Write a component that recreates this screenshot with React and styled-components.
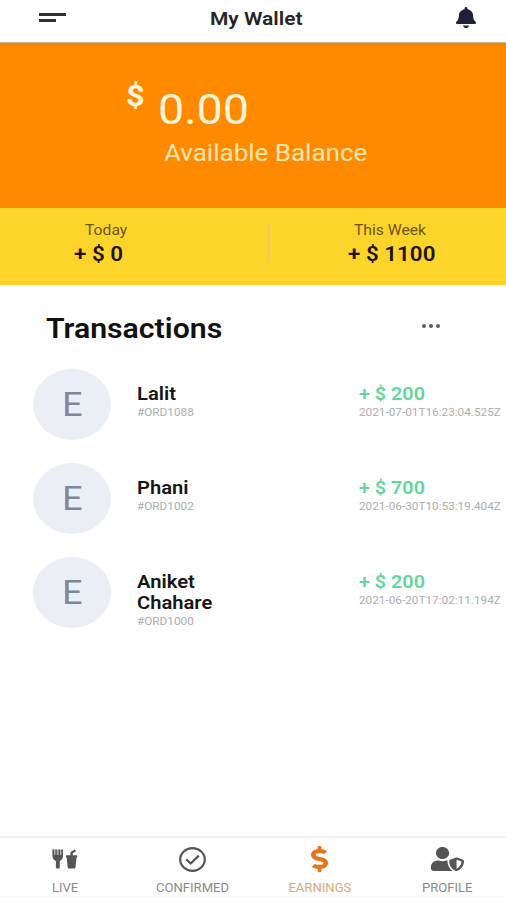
import React from "react";
import styled, { createGlobalStyle } from "styled-components";
import { FaBell, FaDollarSign, FaUserShield } from "react-icons/fa";

const transactions = [
  { id: "#ORD1088", name: "Lalit", amount: 200, date: "2021-07-01T16:23:04.525Z" },
  { id: "#ORD1002", name: "Phani", amount: 700, date: "2021-06-30T10:53:19.404Z" },
  { id: "#ORD1000", name: "Aniket Chahare", amount: 200, date: "2021-06-20T17:02:11.194Z" },
];

const ForkDrinkIcon = () => (
  <svg viewBox="0 0 26 20" fill="currentColor">
    {/* fork */}
    <path d="M0.5 0.5H2V6H3.4V0.5H4.8V6H6.6V0.5H8V6H9.4V0.5H11V7C11 9.5 9.6 11.2 7.8 12V18.5Q7.8 19.6 6.7 19.6H5Q3.9 19.6 3.9 18.5V12C1.9 11.2 0.5 9.5 0.5 7Z" />
    <rect x="0.5" y="0.5" width="10.5" height="6" opacity="0.45" />
    {/* drink */}
    <path d="M14 6.2H18.4V4.2Q18.4 3.2 19.3 2.6L22.8 0.5L24 2.2L20.8 4.3V6.2H25.2V8.6H24.5L23.5 18.6Q23.4 19.6 22.4 19.6H16.8Q15.8 19.6 15.7 18.6L14.7 8.6H14Z" />
  </svg>
);

const CheckCircleIcon = () => (
  <svg viewBox="0 0 27 25" fill="none" stroke="currentColor" strokeWidth="2.2">
    <ellipse cx="13.5" cy="12.5" rx="12.3" ry="11.3" />
    <path d="M7.2 12.4L11.7 16.6L19.8 8.6" />
  </svg>
);

const TransactionRow = ({ id, name, amount, date }) => (
  <Row>
    <Avatar>
      <Initial>E</Initial>
    </Avatar>
    <Customer>
      <Name>{name}</Name>
      <Small>{id}</Small>
    </Customer>
    <Payment>
      <Amount>+ $ {amount}</Amount>
      <Small>{date}</Small>
    </Payment>
  </Row>
);

const App = () => {
  return (
    <Screen>
      <GlobalStyle />
      <Header>
        <MenuButton aria-label="menu">
          <MenuLine $width={27} />
          <MenuLine $width={17} />
        </MenuButton>
        <Title>My Wallet</Title>
        <BellButton aria-label="notifications">
          <FaBell preserveAspectRatio="none" />
        </BellButton>
      </Header>

      <Balance>
        <Currency>$</Currency>
        <BalanceInfo>
          <BalanceAmount>0.00</BalanceAmount>
          <BalanceLabel>Available Balance</BalanceLabel>
        </BalanceInfo>
      </Balance>

      <Summary>
        <Today>
          <SummaryLabel $indent={11}>Today</SummaryLabel>
          <SummaryAmount>+ $ 0</SummaryAmount>
        </Today>
        <Divider />
        <Week>
          <SummaryLabel $indent={6}>This Week</SummaryLabel>
          <SummaryAmount>+ $ 1100</SummaryAmount>
        </Week>
      </Summary>

      <SectionHeader>
        <SectionTitle>Transactions</SectionTitle>
        <MoreButton aria-label="more">
          <Dot />
          <Dot />
          <Dot />
        </MoreButton>
      </SectionHeader>

      <List>
        {transactions.map((item) => (
          <TransactionRow key={item.id} {...item} />
        ))}
      </List>

      <TabBar>
        <Tab>
          <TabIcon $width={26} $height={20}>
            <ForkDrinkIcon />
          </TabIcon>
          <TabLabel>LIVE</TabLabel>
        </Tab>
        <Tab>
          <TabIcon $width={27} $height={25}>
            <CheckCircleIcon />
          </TabIcon>
          <TabLabel>CONFIRMED</TabLabel>
        </Tab>
        <Tab $active>
          <TabIcon $width={17} $height={26}>
            <FaDollarSign preserveAspectRatio="none" />
          </TabIcon>
          <TabLabel $active>EARNINGS</TabLabel>
        </Tab>
        <Tab>
          <TabIcon $width={33} $height={24}>
            <FaUserShield preserveAspectRatio="none" />
          </TabIcon>
          <TabLabel>PROFILE</TabLabel>
        </Tab>
      </TabBar>
    </Screen>
  );
};

export default App;

const GlobalStyle = createGlobalStyle`
  * {
    box-sizing: border-box;
  }
  body {
    margin: 0;
    background: #fefefe;
    font-family: Roboto, "Liberation Sans", sans-serif;
  }
`;

const Screen = styled.div`
  display: flex;
  flex-direction: column;
  width: 506px;
  height: 900px;
  padding-bottom: 3px;
  overflow: hidden;
  background: #fefefe;
`;

/* wide text, grows to the right of its start */
const Wide = styled.div`
  width: max-content;
  transform: scaleX(1.12);
  transform-origin: left center;
  white-space: nowrap;
`;

const Header = styled.header`
  display: flex;
  align-items: flex-start;
  height: 43px;
  padding: 0 30px 0 39px;
  border-bottom: 1px solid #d9b183;
`;

const MenuButton = styled.button`
  display: flex;
  flex-direction: column;
  gap: 3px;
  width: 171px;
  padding: 13px 0 0;
  border: none;
  background: none;
`;

const MenuLine = styled.span`
  width: ${({ $width }) => $width}px;
  height: 3px;
  background: #303030;
`;

const Title = styled(Wide)`
  padding-top: 8px;
  color: #252525;
  font-size: 18px;
  line-height: 21px;
  font-weight: 600;
  transform: scaleX(1.165);
`;

const BellButton = styled.button`
  margin-left: auto;
  padding: 7px 0 0;
  border: none;
  background: none;
  color: #20203a;
  svg {
    display: block;
    width: 20px;
    height: 21px;
  }
`;

const Balance = styled.section`
  display: flex;
  height: 165px;
  padding-left: 126px;
  background: #ff8a00;
  box-shadow: inset 0 2px 1px #ef8207;
`;

const Currency = styled(Wide)`
  width: 32px;
  padding-top: 35px;
  color: #fff4d8;
  font-size: 29px;
  line-height: 36px;
  font-weight: 700;
`;

const BalanceInfo = styled.div`
  display: flex;
  flex-direction: column;
`;

const BalanceAmount = styled(Wide)`
  padding-top: 40px;
  color: #fff4d8;
  font-size: 43px;
  line-height: 52px;
  transform: scaleX(1.085);
`;

const BalanceLabel = styled(Wide)`
  margin-left: 6px;
  padding-top: 4px;
  color: #ffe6ae;
  font-size: 24px;
  line-height: 28px;
  transform: scaleX(1.083);
`;

const Summary = styled.section`
  display: flex;
  height: 77px;
  padding-top: 13px;
  background: #fdd42a;
`;

const Today = styled.div`
  width: 268px;
  padding-left: 74px;
`;

const Divider = styled.div`
  width: 2px;
  height: 38px;
  margin: 3px 1px 0 0;
  background: #f6c766;
`;

const Week = styled.div`
  padding-left: 77px;
`;

const SummaryLabel = styled(Wide)`
  margin-left: ${({ $indent }) => $indent}px;
  color: #6b5619;
  font-size: 14px;
  line-height: 18px;
`;

const SummaryAmount = styled(Wide)`
  color: #1d1305;
  font-size: 20px;
  line-height: 30px;
  font-weight: 600;
`;

const SectionHeader = styled.div`
  display: flex;
  align-items: flex-start;
  justify-content: space-between;
  height: 84px;
  padding: 28px 66px 0 46px;
`;

const SectionTitle = styled(Wide)`
  color: #111;
  font-size: 27px;
  line-height: 32px;
  font-weight: 600;
`;

const MoreButton = styled.button`
  display: flex;
  gap: 3px;
  padding: 11px 0 0;
  border: none;
  background: none;
`;

const Dot = styled.span`
  width: 4px;
  height: 4px;
  border-radius: 50%;
  background: #5f5f5f;
`;

const List = styled.div`
  display: flex;
  flex-direction: column;
  gap: 23px;
  flex: 1;
`;

const Row = styled.div`
  display: flex;
  height: 71px;
  padding-left: 33px;
`;

const Avatar = styled.div`
  display: flex;
  align-items: center;
  justify-content: center;
  flex: none;
  width: 78px;
  height: 71px;
  border-radius: 50%;
  background: #ebeef5;
`;

const Initial = styled.span`
  color: #7e8699;
  font-size: 33px;
  transform: scaleX(1.08);
`;

const Customer = styled.div`
  flex: none;
  width: 248px;
  padding: 14px 0 0 26px;
`;

const Name = styled(Wide)`
  width: 76px;
  color: #161616;
  font-size: 18px;
  line-height: 21px;
  font-weight: 600;
  white-space: normal;
`;

const Payment = styled.div`
  padding-top: 14px;
`;

const Amount = styled(Wide)`
  color: #66d49d;
  font-size: 18px;
  line-height: 21px;
  font-weight: 600;
  transform: scaleX(1.1);
`;

const Small = styled(Wide)`
  color: #adadad;
  font-size: 11px;
  line-height: 18px;
  transform: scaleX(1.07);
`;

const TabBar = styled.nav`
  display: flex;
  height: 61px;
  border-top: 2px solid #f2f2f2;
  border-bottom: 1px solid #f8f8f8;
`;

const Tab = styled.div`
  display: flex;
  flex-direction: column;
  align-items: center;
  flex: 0 0 127.5px;
  padding-left: 2px;
  color: ${({ $active }) => ($active ? "#e8731a" : "#555")};
`;

const TabIcon = styled.div`
  display: flex;
  align-items: center;
  height: 42px;
  svg {
    width: ${({ $width }) => $width}px;
    height: ${({ $height }) => $height}px;
  }
`;

const TabLabel = styled(Wide)`
  transform: scaleX(1.09);
  transform-origin: center;
  color: ${({ $active }) => ($active ? "#e0a878" : "#8a8a8a")};
  font-size: 12px;
  line-height: 16px;
`;
